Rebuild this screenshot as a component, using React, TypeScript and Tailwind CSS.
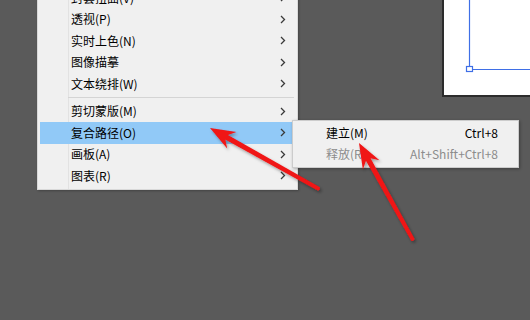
import React from "react";

type Pt = [number, number];

function arrowPoints(tip: Pt, tail: Pt): string {
  const dx = tail[0] - tip[0];
  const dy = tail[1] - tip[1];
  const len = Math.hypot(dx, dy);
  const ux = dx / len;
  const uy = dy / len;
  const px = -uy;
  const py = ux;
  const headLen = 25;
  const headHalf = 9.5;
  const notch = 19;
  const neckHalf = 2.6;
  const tailHalf = 1.9;
  const p = (a: number, b: number): string =>
    `${(tip[0] + ux * a + px * b).toFixed(2)},${(tip[1] + uy * a + py * b).toFixed(2)}`;
  return [
    p(0, 0),
    p(headLen, headHalf),
    p(notch, neckHalf),
    p(len, tailHalf),
    p(len + 1, 0),
    p(len, -tailHalf),
    p(notch, -neckHalf),
    p(headLen, -headHalf),
  ].join(" ");
}

function Chevron() {
  return (
    <svg width="6" height="9" viewBox="0 0 6 9" className="block">
      <path d="M1 1 L4.5 4.5 L1 8" fill="none" stroke="#3a3a3a" strokeWidth="1.3" />
    </svg>
  );
}

type Item = { label: string; active?: boolean };

const topItems: Item[] = [
  { label: "封套扭曲(V)" },
  { label: "透视(P)" },
  { label: "实时上色(N)" },
  { label: "图像描摹" },
  { label: "文本绕排(W)" },
];

const bottomItems: Item[] = [
  { label: "剪切蒙版(M)" },
  { label: "复合路径(O)", active: true },
  { label: "画板(A)" },
  { label: "图表(R)" },
];

function Row({ item }: { item: Item }) {
  return (
    <div
      className={`relative z-10 flex h-[21.5px] items-center justify-between pl-[31px] pr-[10px] ${
        item.active ? "bg-[#91c9f7]" : ""
      }`}
    >
      <span className="text-[12px] leading-none text-black">{item.label}</span>
      <Chevron />
    </div>
  );
}

export default function App() {
  return (
    <div
      className="relative h-[320px] w-[530px] overflow-hidden bg-[#5a5a5a]"
      style={{ fontFamily: '"Noto Sans CJK SC", "Noto Sans", sans-serif' }}
    >
      {/* artboard */}
      <div className="absolute left-[442px] top-[-4px] z-0 h-[101px] w-[100px] border-b-2 border-l-2 border-[#2c2c2c] bg-white">
        <svg width="100" height="101" className="absolute left-[-2px] top-0" viewBox="442 -4 100 101">
          <line x1="469.5" y1="-4" x2="469.5" y2="66" stroke="#3f6fe6" strokeWidth="1.2" />
          <rect x="466.5" y="66.5" width="6" height="5" fill="white" stroke="#3f6fe6" strokeWidth="1.2" />
          <line x1="472.5" y1="69.5" x2="542" y2="69.5" stroke="#3f6fe6" strokeWidth="1.2" />
        </svg>
      </div>

      {/* main menu */}
      <div className="absolute left-[37px] top-[-17px] z-10 w-[261px] border border-[#d9d9d9] bg-[#f0f0f0] pb-[2px] pl-[2px] pr-[1px] pt-[3px] shadow-[1px_1px_2px_rgba(0,0,0,0.25)]">
        <div className="absolute bottom-0 left-[30px] top-0 w-px bg-[#e2e2e2]" />
        {topItems.map((it) => (
          <Row key={it.label} item={it} />
        ))}
        <div className="relative z-10 flex h-[6px] items-center pl-[28px] pr-[2px]">
          <div className="h-px w-full bg-[#d4d4d4]" />
        </div>
        {bottomItems.map((it) => (
          <Row key={it.label} item={it} />
        ))}
      </div>

      {/* submenu */}
      <div className="absolute left-[292px] top-[120px] z-20 w-[227px] border border-[#cccccc] bg-[#f0f0f0] pb-[2px] pt-[2px] shadow-[1px_1px_3px_rgba(0,0,0,0.3)]">
        <div className="flex h-[20.5px] items-center justify-between pl-[33px] pr-[20px]">
          <span className="text-[12px] leading-none text-black">建立(M)</span>
          <span className="text-[12px] leading-none text-black">Ctrl+8</span>
        </div>
        <div className="flex h-[21px] items-center justify-between pl-[33px] pr-[20px]">
          <span className="text-[12px] leading-none text-[#8c8c8c]">释放(R)</span>
          <span className="text-[12px] leading-none text-[#8c8c8c]">Alt+Shift+Ctrl+8</span>
        </div>
      </div>

      {/* annotation arrows */}
      <svg className="pointer-events-none absolute left-0 top-0 z-30" width="530" height="320" viewBox="0 0 530 320">
        <defs>
          <filter id="sh" x="-20%" y="-20%" width="140%" height="140%">
            <feDropShadow dx="1.5" dy="2" stdDeviation="1.5" floodColor="#000" floodOpacity="0.35" />
          </filter>
        </defs>
        <polygon points={arrowPoints([210, 128], [319, 189])} fill="#f01414" filter="url(#sh)" />
        <polygon points={arrowPoints([359, 143], [413, 240])} fill="#f01414" filter="url(#sh)" />
      </svg>
    </div>
  );
}
